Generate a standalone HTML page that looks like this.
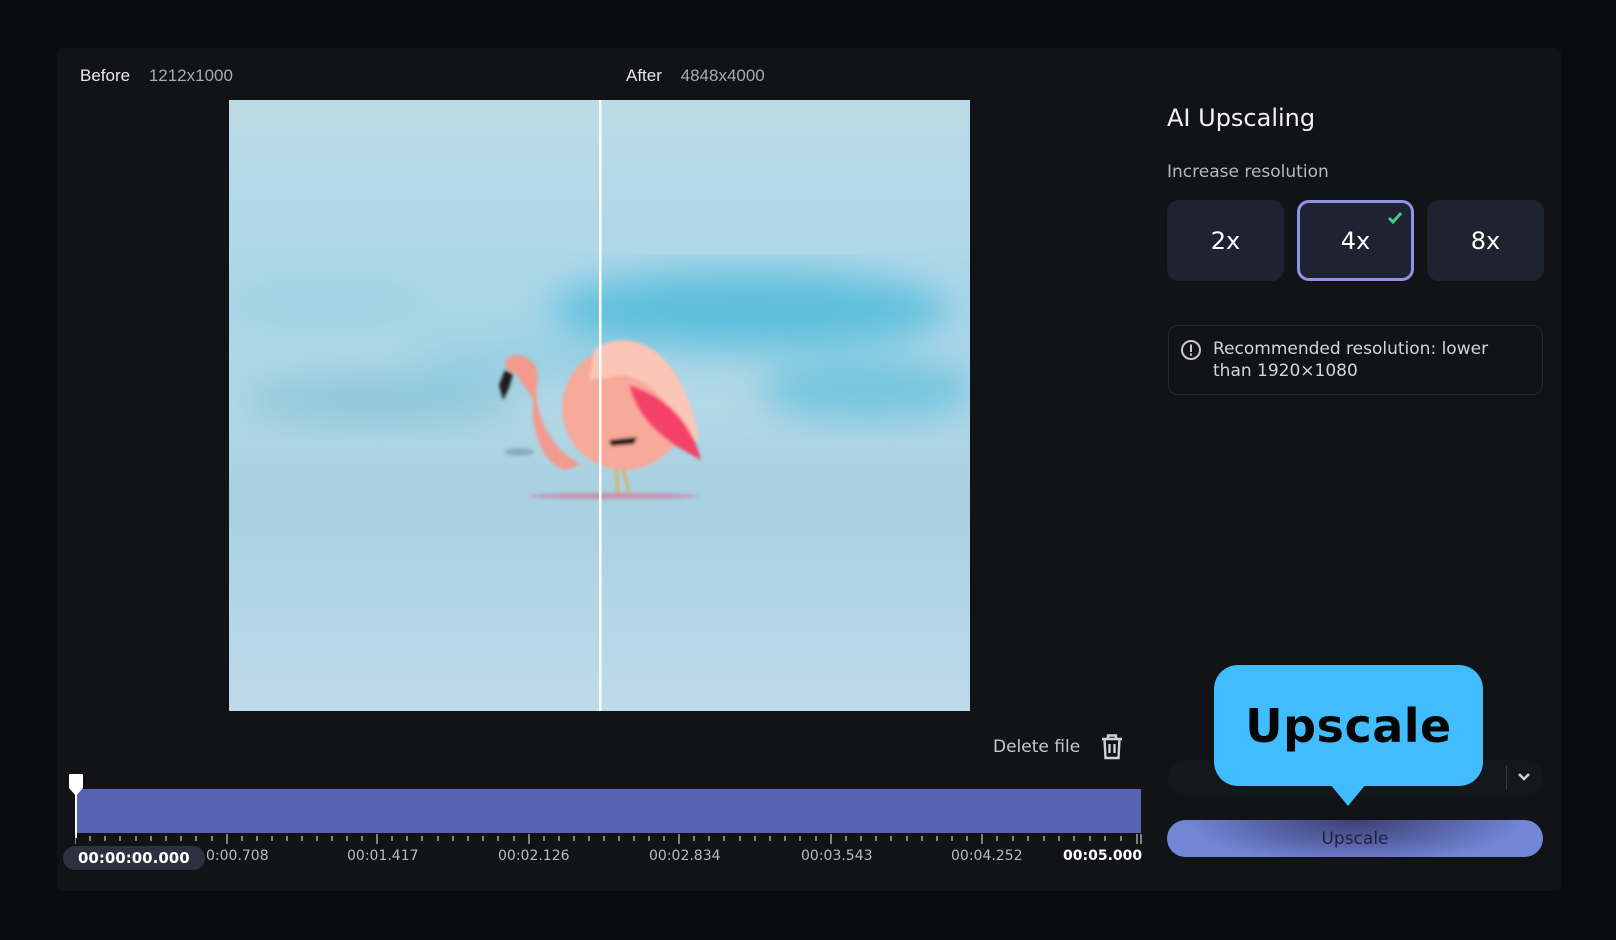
<!DOCTYPE html>
<html><head><meta charset="utf-8"><style>
*{margin:0;padding:0;box-sizing:border-box}
body{width:1616px;height:940px;background:#0b0c0e;font-family:"Liberation Sans","DejaVu Sans",sans-serif;position:relative;overflow:hidden;color:#e6e6ea}
.panel{position:absolute;left:57px;top:48px;width:1504px;height:843px;background:#111316;border-radius:6px}
.a{position:absolute}
.lbl{font-size:17px;color:#e8e8ec}
.dim{color:#a9abb3}
.btn{position:absolute;top:200px;width:117px;height:81px;background:#1f2230;border-radius:12px;font-size:24px;color:#fff;display:flex;align-items:center;justify-content:center;font-family:"DejaVu Sans",sans-serif}
.tl{position:absolute;top:848px;font-size:14px;color:#b8bac2;font-family:"DejaVu Sans",sans-serif}
</style></head><body>
<div class="panel"></div>
<div class="a lbl" style="left:80px;top:66px">Before <span class="dim" style="margin-left:14px">1212x1000</span></div>
<div class="a lbl" style="left:626px;top:66px">After <span class="dim" style="margin-left:14px">4848x4000</span></div>

<svg class="a" style="left:229px;top:100px" width="741" height="611" viewBox="0 0 741 611">
<defs>
<linearGradient id="bg" x1="0" y1="0" x2="0" y2="1">
<stop offset="0" stop-color="#bcdbe8"/><stop offset="0.35" stop-color="#a9d6e8"/><stop offset="0.5" stop-color="#b3d8e6"/><stop offset="0.65" stop-color="#a8d0e2"/><stop offset="1" stop-color="#bddbea"/></linearGradient>
<filter id="bl"><feGaussianBlur stdDeviation="18"/></filter>
<filter id="b2"><feGaussianBlur stdDeviation="1.5"/></filter>
</defs>
<rect width="741" height="611" fill="url(#bg)"/>
<g filter="url(#bl)">
<ellipse cx="520" cy="210" rx="200" ry="40" fill="#3fb6d8" opacity="0.7"/>
<ellipse cx="640" cy="290" rx="110" ry="30" fill="#4ab8d8" opacity="0.6"/>
<ellipse cx="150" cy="300" rx="140" ry="25" fill="#6ab8d0" opacity="0.5"/>
<ellipse cx="300" cy="260" rx="120" ry="20" fill="#80c6de" opacity="0.5"/>
<ellipse cx="100" cy="200" rx="100" ry="25" fill="#9ad0e4" opacity="0.5"/>
</g>
<g filter="url(#b2)">
<path d="M304 300 C296 285 282 272 285 262 C292 250 314 262 308 285 C304 305 318 345 345 360 L352 365 L336 370 C312 362 302 330 304 300Z" fill="#f29a8e"/>
<ellipse cx="395" cy="308" rx="62" ry="62" fill="#f7a99a"/>
<path d="M365 250 C390 232 420 240 440 265 C455 285 465 310 470 340 L455 335 C440 300 420 280 395 275 L360 280Z" fill="#fbc6b6"/>
<path d="M400 285 C435 295 462 320 472 360 L445 345 C425 330 408 315 400 285Z" fill="#f5406a"/>
<ellipse cx="288" cy="264" rx="12" ry="9" fill="#f29a8e"/>
<path d="M276 270 L270 285 L274 300 L280 288 L284 274Z" fill="#1a1a1a"/>
<path d="M380 340 L408 337 L405 344 L382 346Z" fill="#111"/>
<path d="M387 368 L389 395 M394 368 L400 392" stroke="#d8b25a" stroke-width="3"/>
<ellipse cx="385" cy="396" rx="85" ry="3" fill="#d86a8a" opacity="0.6"/>
<ellipse cx="290" cy="352" rx="15" ry="4" fill="#6a8a99" opacity="0.5"/>
</g>
<rect x="370" y="0" width="2.5" height="611" fill="#fff"/>
</svg>

<div class="a" style="left:1167px;top:104px;font-size:24px;color:#f2f2f4;font-family:'DejaVu Sans',sans-serif">AI Upscaling</div>
<div class="a" style="left:1167px;top:162px;font-size:17px;color:#b6b8c0;font-family:'DejaVu Sans',sans-serif">Increase resolution</div>
<div class="btn" style="left:1167px">2x</div>
<div class="btn" style="left:1297px;border:3px solid #8e95e6">4x
<svg class="a" style="right:8px;top:8px" width="16" height="14" viewBox="0 0 16 14"><path d="M2 7 L6 11 L14 2" stroke="#3ecf86" stroke-width="3" fill="none"/></svg></div>
<div class="btn" style="left:1427px">8x</div>

<div class="a" style="left:1168px;top:325px;width:375px;height:70px;border:1.5px solid #262932;border-radius:10px"></div>
<svg class="a" style="left:1180px;top:339px" width="22" height="22" viewBox="0 0 22 22"><circle cx="11" cy="11" r="9" fill="none" stroke="#c8c8cc" stroke-width="2"/><rect x="10" y="5.5" width="2" height="7.5" fill="#c8c8cc"/><rect x="10" y="14.5" width="2" height="2.2" fill="#c8c8cc"/></svg>
<div class="a" style="left:1213px;top:338px;font-size:17px;line-height:22px;color:#d4d5da;font-family:'DejaVu Sans',sans-serif">Recommended resolution: lower<br>than 1920×1080</div>

<div class="a" style="left:1168px;top:760px;width:375px;height:36px;background:#15171c;border-radius:18px"></div>
<div class="a" style="left:1506px;top:766px;width:1px;height:24px;background:#3a3d46"></div>
<svg class="a" style="left:1517px;top:772px" width="14" height="10" viewBox="0 0 14 10"><path d="M2 2 L7 7 L12 2" stroke="#cfd0d6" stroke-width="2.5" fill="none"/></svg>

<div class="a" style="left:1167px;top:820px;width:376px;height:37px;border-radius:19px;background:radial-gradient(ellipse 45% 120% at 50% 0%,#3a4070 0%,#5864a8 55%,#7286d6 100%);display:flex;align-items:center;justify-content:center;font-size:17px;color:#1e2240;font-family:'DejaVu Sans',sans-serif">Upscale</div>

<div class="a" style="left:1214px;top:665px;width:269px;height:121px;background:#41bdfd;border-radius:24px;display:flex;align-items:center;justify-content:center;font-size:46px;font-weight:bold;color:#050505;font-family:'DejaVu Sans',sans-serif;letter-spacing:0.5px">Upscale</div>
<svg class="a" style="left:1330px;top:784px" width="36" height="23" viewBox="0 0 36 23"><path d="M0 0 L36 0 L18 22Z" fill="#41bdfd"/></svg>

<div class="a" style="left:993px;top:737px;font-size:17px;color:#c8c9ce;font-family:'DejaVu Sans',sans-serif">Delete file</div>
<svg class="a" style="left:1099px;top:733px" width="26" height="28" viewBox="0 0 26 28"><path d="M3 6 H23 M9 6 V2.5 H17 V6 M5.5 6 L6.5 25 H19.5 L20.5 6 M10.5 11 V20 M15.5 11 V20" stroke="#d0d1d6" stroke-width="2.4" fill="none"/></svg>

<div class="a" style="left:77px;top:789px;width:1064px;height:44px;background:#5563b2"></div>
<div class="a" style="left:75px;top:790px;width:2px;height:48px;background:#fff"></div>
<svg class="a" style="left:67px;top:773px" width="18" height="26" viewBox="0 0 18 26"><path d="M3 1 H15 Q16 1 16 3 V15 L9 23 L2 15 V3 Q2 1 3 1Z" fill="#fff"/></svg>
<svg class="a" style="left:75px;top:834px" width="1070" height="12">
<g stroke="#c8c8cc" stroke-width="1.2">
<path d="M0 0V10 M152 0V10 M302 0V10 M454 0V10 M604 0V10 M756 0V10 M907 0V10 M1062 0V10 M1066 0V10"/>
<path d="M15 2V7 M30 2V7 M45 2V7 M61 2V7 M76 2V7 M91 2V7 M106 2V7 M121 2V7 M137 2V7 M167 2V7 M182 2V7 M197 2V7 M212 2V7 M227 2V7 M242 2V7 M257 2V7 M272 2V7 M287 2V7 M317 2V7 M332 2V7 M347 2V7 M363 2V7 M378 2V7 M393 2V7 M408 2V7 M423 2V7 M439 2V7 M469 2V7 M484 2V7 M499 2V7 M514 2V7 M529 2V7 M544 2V7 M559 2V7 M574 2V7 M589 2V7 M619 2V7 M634 2V7 M649 2V7 M665 2V7 M680 2V7 M695 2V7 M710 2V7 M725 2V7 M741 2V7 M771 2V7 M786 2V7 M801 2V7 M816 2V7 M832 2V7 M847 2V7 M862 2V7 M877 2V7 M892 2V7 M922 2V7 M938 2V7 M953 2V7 M969 2V7 M984 2V7 M999 2V7 M1015 2V7 M1030 2V7 M1046 2V7"/>
</g></svg>
<div class="a" style="left:63px;top:846px;width:142px;height:24px;border-radius:12px;background:#2c3140"></div>
<div class="a" style="left:78px;top:849px;font-size:15px;font-weight:bold;color:#fff;font-family:'DejaVu Sans',sans-serif">00:00:00.000</div>
<div class="tl" style="left:206px">0:00.708</div>
<div class="tl" style="left:347px">00:01.417</div>
<div class="tl" style="left:498px">00:02.126</div>
<div class="tl" style="left:649px">00:02.834</div>
<div class="tl" style="left:801px">00:03.543</div>
<div class="tl" style="left:951px">00:04.252</div>
<div class="tl" style="left:1063px;color:#fff;font-weight:bold">00:05.000</div>
</body></html>
